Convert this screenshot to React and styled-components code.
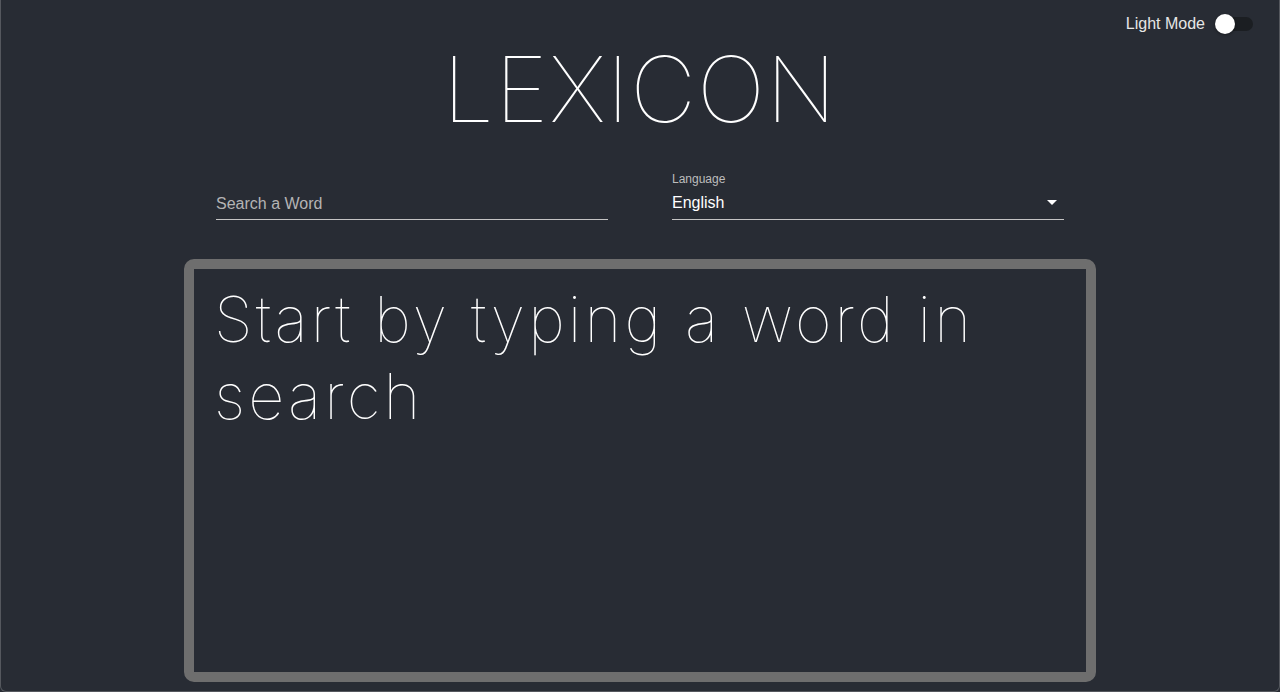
import React, { useState } from "react";
import styled, { createGlobalStyle } from "styled-components";

const Global = createGlobalStyle`
  html, body { margin: 0; padding: 0; background: #282c34; }
  * { box-sizing: border-box; }
`;

const Frame = styled.div`
  height: 692px;
  background: #282c34;
  border-left: 1px solid #55585e;
  border-right: 1px solid #55585e;
  border-bottom: 1px solid #55585e;
  border-radius: 0 0 6px 6px;
  overflow: hidden;
  display: flex;
  flex-direction: column;
`;

const TopBar = styled.div`
  display: flex;
  justify-content: flex-end;
  align-items: center;
  gap: 10px;
  height: 24px;
  margin-top: 12px;
  padding-right: 26px;
`;

const ModeLabel = styled.span`
  font-family: "Liberation Sans", Arial, sans-serif;
  font-size: 16px;
  color: #e6e6e6;
`;

const Switch = styled.button`
  position: relative;
  width: 38px;
  height: 24px;
  padding: 0;
  border: none;
  background: transparent;
  cursor: pointer;
`;

const Track = styled.span`
  position: absolute;
  left: 2px;
  right: 0;
  top: 5px;
  height: 14px;
  border-radius: 7px;
  background: ${(p) => (p.$on ? "#90caf9" : "#1b1e22")};
`;

const Thumb = styled.span`
  position: absolute;
  top: 2px;
  left: ${(p) => (p.$on ? "18px" : "0px")};
  width: 20px;
  height: 20px;
  border-radius: 50%;
  background: #ffffff;
  box-shadow: 0 1px 3px rgba(0, 0, 0, 0.4);
`;

const Title = styled.h1`
  margin: 0;
  text-align: center;
  font-family: "Inter", "Open Sans", sans-serif;
  font-weight: 100;
  font-size: 91px;
  line-height: 106px;
  letter-spacing: 1px;
  color: #ffffff;
`;

const Controls = styled.div`
  display: grid;
  grid-template-columns: 392px 392px;
  column-gap: 64px;
  justify-content: center;
  margin-top: 30px;
`;

const Field = styled.div`
  display: flex;
  flex-direction: column;
  justify-content: flex-end;
  height: 48px;
  border-bottom: 1px solid #c4c4c4;
`;

const SmallLabel = styled.label`
  font-family: "Liberation Sans", Arial, sans-serif;
  font-size: 12px;
  color: #bdbdbd;
  line-height: 14px;
  margin-bottom: 8px;
`;

const TextInput = styled.input`
  font-family: "Liberation Sans", Arial, sans-serif;
  font-size: 16px;
  color: #ffffff;
  background: transparent;
  border: none;
  outline: none;
  padding: 4px 0 6px;
  line-height: 19px;
  &::placeholder { color: #b4b4b4; opacity: 1; }
`;

const SelectRow = styled.div`
  display: flex;
  align-items: center;
  justify-content: space-between;
  height: 25px;
  padding-bottom: 9px;
`;

const SelectValue = styled.span`
  font-family: "Liberation Sans", Arial, sans-serif;
  font-size: 16px;
  line-height: 19px;
  color: #ffffff;
`;

const ResultBox = styled.div`
  width: 912px;
  height: 423px;
  margin: 39px auto 0;
  border: 10px solid #6e6e6e;
  border-radius: 10px;
  padding: 12px 20px;
`;

const Placeholder = styled.p`
  margin: 0;
  font-family: "Inter", "Open Sans", sans-serif;
  font-weight: 100;
  font-size: 63px;
  line-height: 77px;
  letter-spacing: 3.1px;
  color: #ffffff;
`;

export default function App() {
  const [light, setLight] = useState(false);
  return (
    <>
      <Global />
      <Frame>
        <TopBar>
          <ModeLabel>Light Mode</ModeLabel>
          <Switch onClick={() => setLight(!light)} aria-label="Light Mode">
            <Track $on={light} />
            <Thumb $on={light} />
          </Switch>
        </TopBar>
        <Title>LEXICON</Title>
        <Controls>
          <Field>
            <TextInput placeholder="Search a Word" />
          </Field>
          <Field>
            <SmallLabel>Language</SmallLabel>
            <SelectRow>
              <SelectValue>English</SelectValue>
              <svg width="24" height="24" viewBox="0 0 24 24">
                <path d="M7 10l5 5 5-5z" fill="#ffffff" />
              </svg>
            </SelectRow>
          </Field>
        </Controls>
        <ResultBox>
          <Placeholder>Start by typing a word in search</Placeholder>
        </ResultBox>
      </Frame>
    </>
  );
}
